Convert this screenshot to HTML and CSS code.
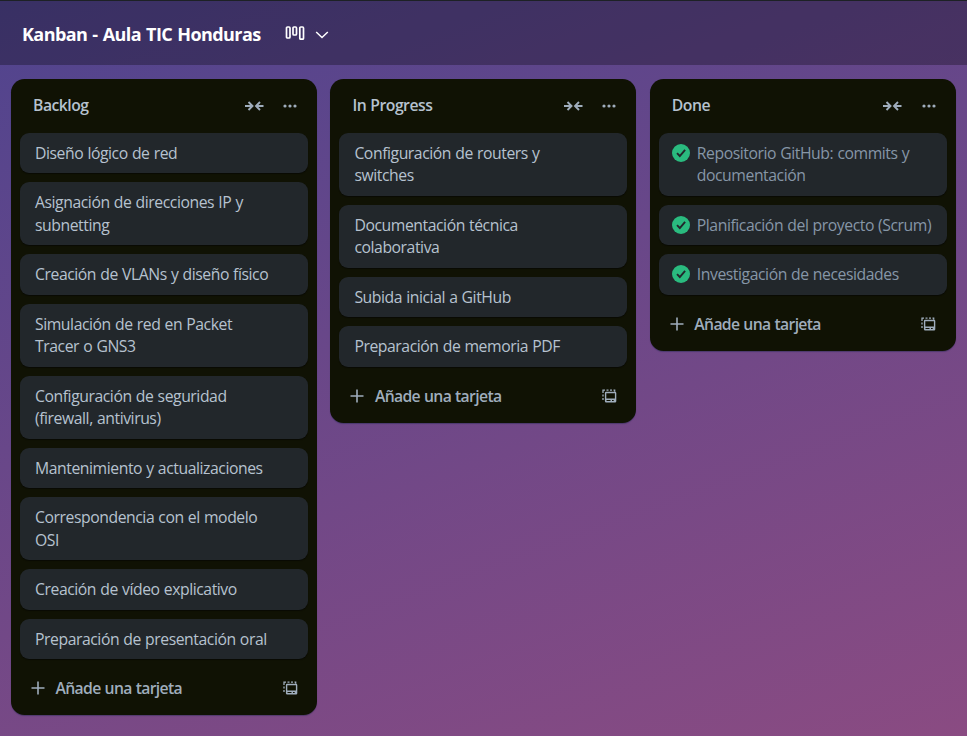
FILE: index.html
```
<!DOCTYPE html>
<html lang="es">
<head>
<meta charset="utf-8">
<title>Kanban - Aula TIC Honduras</title>
<link rel="stylesheet" href="styles.css">
</head>
<body>
<svg class="defs" width="0" height="0" aria-hidden="true">
  <symbol id="collapse" viewBox="0 0 20 12"><path d="M1 6h6.500M4.500 2l4 4-4 4M19.500 6h-6.500M16 2l-4 4 4 4" fill="none" stroke="currentColor" stroke-width="1.9"/></symbol>
  <symbol id="more" viewBox="0 0 14 4"><circle cx="2" cy="2" r="1.6"/><circle cx="7" cy="2" r="1.6"/><circle cx="12" cy="2" r="1.6"/></symbol>
  <symbol id="plus" viewBox="0 0 14 14"><path d="M7 .5v13M.5 7h13" fill="none" stroke="currentColor" stroke-width="1.6"/></symbol>
  <symbol id="template" viewBox="0 0 15 14"><path d="M1 11V9M1 7.500V5.500M1 4V1.200h2M4.500 1.200h2M8 1.200h2M11.500 1.200h1.200v1.500" fill="none" stroke="currentColor" stroke-width="1.300"/><path fill-rule="evenodd" d="M4.200 2.700H13a1.300 1.300 0 0 1 1.300 1.300v8.200a1.300 1.300 0 0 1-1.300 1.300H4.200a1.300 1.300 0 0 1-1.300-1.300V4A1.300 1.300 0 0 1 4.200 2.700Zm.1 1.500v5.300h8.600V4.200Zm.2 6.700v1.200h4v-1.200Zm5.500 0v1.200h1.700v-1.200Z"/></symbol>
  <symbol id="check" viewBox="0 0 18 18"><circle cx="9" cy="9" r="9" fill="#2abb7f"/><path d="M5 9.200l2.800 2.800 5.300-6.200" fill="none" stroke="#22272b" stroke-width="1.900"/></symbol>
</svg>
<header class="topbar">
  <h1>Kanban - Aula TIC Honduras</h1>
  <svg class="board-icon" viewBox="0 0 20 14"><path d="M2.500 1h1.500a1 1 0 0 1 1 1v9a1 1 0 0 1-1 1H2.500a1 1 0 0 1-1-1V2a1 1 0 0 1 1-1ZM9 1h1.500a1 1 0 0 1 1 1v6a1 1 0 0 1-1 1H9a1 1 0 0 1-1-1V2a1 1 0 0 1 1-1ZM15.800 1h1.700a1 1 0 0 1 1 1v10.200a1 1 0 0 1-1 1h-1.700a1 1 0 0 1-1-1V2a1 1 0 0 1 1-1Z" fill="none" stroke="currentColor" stroke-width="1.700"/></svg>
  <svg class="chevron" viewBox="0 0 14 8"><path d="M1.200 1l5.800 5.500L12.800 1" fill="none" stroke="currentColor" stroke-width="1.500"/></svg>
</header>
<main class="board">
  <section class="list">
    <div class="list-head"><h2>Backlog</h2><svg class="collapse"><use href="#collapse"/></svg><svg class="more"><use href="#more"/></svg></div>
    <ul>
      <li>Diseño lógico de red</li>
      <li>Asignación de direcciones IP y<br>subnetting</li>
      <li>Creación de VLANs y diseño físico</li>
      <li>Simulación de red en Packet<br>Tracer o GNS3</li>
      <li>Configuración de seguridad<br>(firewall, antivirus)</li>
      <li>Mantenimiento y actualizaciones</li>
      <li>Correspondencia con el modelo<br>OSI</li>
      <li>Creación de vídeo explicativo</li>
      <li>Preparación de presentación oral</li>
    </ul>
    <div class="list-foot"><svg class="plus"><use href="#plus"/></svg><span>Añade una tarjeta</span><svg class="template"><use href="#template"/></svg></div>
  </section>
  <section class="list">
    <div class="list-head"><h2>In Progress</h2><svg class="collapse"><use href="#collapse"/></svg><svg class="more"><use href="#more"/></svg></div>
    <ul>
      <li>Configuración de routers y<br>switches</li>
      <li>Documentación técnica<br>colaborativa</li>
      <li>Subida inicial a GitHub</li>
      <li>Preparación de memoria PDF</li>
    </ul>
    <div class="list-foot"><svg class="plus"><use href="#plus"/></svg><span>Añade una tarjeta</span><svg class="template"><use href="#template"/></svg></div>
  </section>
  <section class="list">
    <div class="list-head"><h2>Done</h2><svg class="collapse"><use href="#collapse"/></svg><svg class="more"><use href="#more"/></svg></div>
    <ul>
      <li class="done"><svg class="check"><use href="#check"/></svg><span>Repositorio GitHub: commits y<br>documentación</span></li>
      <li class="done"><svg class="check"><use href="#check"/></svg><span>Planificación del proyecto (Scrum)</span></li>
      <li class="done"><svg class="check"><use href="#check"/></svg><span>Investigación de necesidades</span></li>
    </ul>
    <div class="list-foot"><svg class="plus"><use href="#plus"/></svg><span>Añade una tarjeta</span><svg class="template"><use href="#template"/></svg></div>
  </section>
</main>
</body>
</html>
```
FILE: styles.css
```
* { box-sizing: border-box; }
body {
  margin: 0;
  height: 736px;
  overflow: hidden;
  background: linear-gradient(160deg, #50448e 0%, #8a4b82 100%);
  color: #b6c2cf;
  font: 15.75px/22.5px "Open Sans", "Noto Sans", sans-serif;
  letter-spacing: -0.44px;
  word-spacing: 0.5px;
  white-space: nowrap;
}
h1, h2, ul { margin: 0; padding: 0; }
svg { display: block; flex: none; fill: currentColor; }
.defs { position: absolute; }
.topbar {
  display: flex;
  align-items: center;
  height: 65px;
  padding: 3px 22px 0;
  border-top: 1px solid #1d2125;
  background: rgba(0, 0, 0, 0.29);
  color: #fff;
}
h1 { width: 240px; font-size: 18px; line-height: 27px; font-weight: 700; letter-spacing: -0.58px; word-spacing: 1px; }
.board-icon { width: 20px; height: 14px; margin: -3px 0 0 23px; }
.chevron { width: 14px; height: 8px; margin-left: 10px; }
.board { display: flex; align-items: flex-start; gap: 13.4px; padding: 14px 11px; }
.list {
  flex: none;
  width: 306px;
  border-radius: 13.5px;
  background: #101204;
  box-shadow: 0 1px 1px rgba(9, 30, 66, 0.35);
}
.list-head {
  display: flex;
  align-items: center;
  height: 53.9px;
  padding: 0 20px 0 22px;
  color: #9fadbc;
}
h2 { flex: 1; margin-top: -1px; font-size: 15.75px; line-height: 22.5px; font-weight: 650; letter-spacing: -0.5px; color: #b6c2cf; }
.collapse { width: 20px; height: 12px; margin-right: 19.5px; }
.more { width: 14px; height: 4px; }
ul { display: flex; flex-direction: column; gap: 9px; padding: 0 9px; list-style: none; }
li {
  padding: 9px 15px;
  border-radius: 9px;
  background: #22272b;
  box-shadow: 0 1px 1px rgba(3, 4, 4, 0.5);
}
.done { display: flex; gap: 7px; padding-left: 13px; color: #8696a7; }
.check { width: 18px; height: 18px; margin-top: 2px; }
.list-foot {
  display: flex;
  align-items: center;
  height: 56.1px;
  padding: 2px 19.5px 0 20px;
  color: #9fadbc;
  font-weight: 650;
  letter-spacing: -0.66px;
}
.list-foot span { flex: 1; margin-left: 10.5px; }
.plus { width: 14px; height: 14px; }
.template { width: 15px; height: 14px; }
```
